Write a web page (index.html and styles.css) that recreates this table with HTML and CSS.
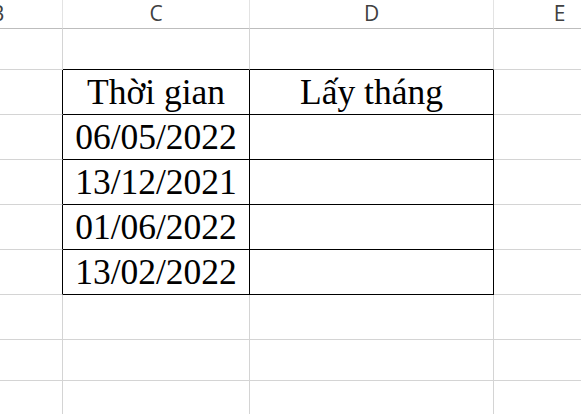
FILE: index.html
```html
<!DOCTYPE html>
<html lang="vi">
<head>
<meta charset="utf-8">
<title>Lấy tháng</title>
<link rel="stylesheet" href="styles.css">
</head>
<body>
<div class="sheet">
  <div class="cell hd">B</div>
  <div class="cell hd">C</div>
  <div class="cell hd">D</div>
  <div class="cell hd">E</div>

  <div class="cell"></div>
  <div class="cell tt"></div>
  <div class="cell tt"></div>
  <div class="cell"></div>

  <div class="cell tl"></div>
  <div class="cell t">Thời gian</div>
  <div class="cell t">Lấy tháng</div>
  <div class="cell"></div>

  <div class="cell tl"></div>
  <div class="cell t">06/05/2022</div>
  <div class="cell t"></div>
  <div class="cell"></div>

  <div class="cell tl"></div>
  <div class="cell t">13/12/2021</div>
  <div class="cell t"></div>
  <div class="cell"></div>

  <div class="cell tl"></div>
  <div class="cell t">01/06/2022</div>
  <div class="cell t"></div>
  <div class="cell"></div>

  <div class="cell tl"></div>
  <div class="cell t">13/02/2022</div>
  <div class="cell t"></div>
  <div class="cell"></div>

  <div class="cell"></div>
  <div class="cell"></div>
  <div class="cell"></div>
  <div class="cell"></div>

  <div class="cell"></div>
  <div class="cell"></div>
  <div class="cell"></div>
  <div class="cell"></div>

  <div class="cell"></div>
  <div class="cell"></div>
  <div class="cell"></div>
  <div class="cell"></div>
</div>
</body>
</html>
```

FILE: styles.css
```css
html, body {
  margin: 0;
  padding: 0;
  background: #ffffff;
  overflow: hidden;
}

.sheet {
  display: grid;
  grid-template-columns: 130px 187px 244px 132px;
  grid-template-rows: 29px 41px 45px 45px 45px 45px 45px 45px 41px 45px;
  margin-left: -67px;
  width: 693px;
}

.cell {
  box-sizing: border-box;
  border-right: 1px solid #d4d4d4;
  border-bottom: 1px solid #d4d4d4;
  display: flex;
  align-items: flex-end;
  justify-content: center;
  font-family: "Liberation Serif", "Times New Roman", serif;
  font-size: 35.5px;
  line-height: 35px;
  padding-bottom: 4px;
  color: #000000;
}

.hd {
  align-items: center;
  padding-bottom: 2px;
  font-family: "Open Sans", "Noto Sans", sans-serif;
  font-size: 21px;
  line-height: 21px;
  color: #404040;
  border-right-color: #e3e3e3;
  border-bottom-color: #bdbdbd;
}

.t {
  border-right-color: #000000;
  border-bottom-color: #000000;
}

.tl {
  border-right-color: #000000;
}

.tt {
  border-bottom-color: #000000;
}
```
